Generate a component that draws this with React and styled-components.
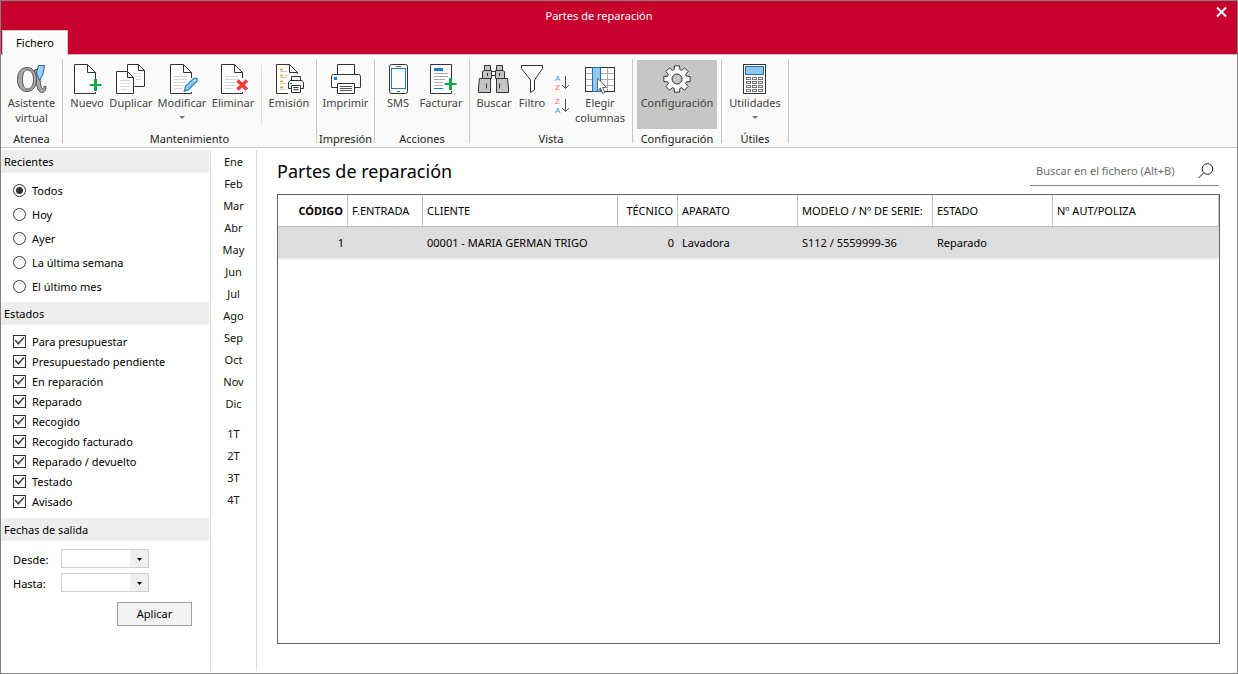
import React, { useState } from "react";
import styled, { createGlobalStyle, css } from "styled-components";

const GlobalStyle = createGlobalStyle`
  * { box-sizing: border-box; }
  body {
    margin: 0;
    background: #fff;
    color: #000;
    font: 11px/15px "Noto Sans", "Open Sans", sans-serif;
  }
  button, input, select { font: inherit; color: inherit; margin: 0; padding: 0; }
`;

const Window = styled.div`
  display: flex;
  flex-direction: column;
  min-height: 100vh;
  border: 1px solid #808080;
`;

/* ---------- title bar ---------- */

const TitleBar = styled.header`
  display: grid;
  grid-template-columns: 1fr 40px;
  align-items: center;
  height: 29px;
  background: #c8002d;
  color: #fff;
`;

const WindowTitle = styled.h1`
  margin: 0;
  font-size: 11px;
  font-weight: 400;
  text-align: center;
`;

const CloseButton = styled.button`
  justify-self: end;
  display: flex;
  padding: 0 10px 8px;
  border: 0;
  background: none;
`;

const TabBar = styled.nav`
  display: flex;
  height: 25px;
  padding-left: 1px;
  background: #c8002d;
  box-shadow: inset 0 -1px #c0c0c0;
`;

const Tab = styled.button`
  width: 66px;
  padding-bottom: 2px;
  border: solid #c8c8c8;
  border-width: 1px 1px 0;
  background: #fafafa;
`;

/* ---------- ribbon ---------- */

const Ribbon = styled.div`
  display: flex;
  height: 93px;
  background: #fafafa;
  border-bottom: 1px solid #c6c6c6;
`;

const Group = styled.section`
  display: flex;
  flex-direction: column;
  padding: 5px 4px 0;
`;

const GroupItems = styled.div`
  display: flex;
  height: 69px;
`;

const GroupLabel = styled.h2`
  margin: 2px -4px 0;
  font-size: 11px;
  font-weight: 400;
  line-height: 15px;
  color: #222;
  text-align: center;
`;

const Divider = styled.span`
  width: 1px;
  margin: 4px 0;
  background: #c8c8c8;
`;

const InnerDivider = styled.span`
  width: 1px;
  margin: 5px 4px;
  background: #e0e0e0;
`;

const RibbonButton = styled.button`
  display: flex;
  flex-direction: column;
  align-items: center;
  width: ${(p) => p.$width}px;
  padding-top: 4px;
  border: 0;
  background: ${(p) => (p.$active ? "#c6c6c6" : "none")};
  color: #444;
  line-height: 15px;
  white-space: nowrap;
  svg { flex: none; }
`;

const SortStack = styled.div`
  display: flex;
  flex-direction: column;
  gap: 3px;
  width: 22px;
  padding: 13px 0 0 4px;
`;

const SortButton = styled.button`
  display: flex;
  border: 0;
  background: none;
`;

const MenuArrow = styled.span`
  margin-top: 6px;
  border: solid transparent;
  border-width: 3px 3px 0;
  border-top-color: #777;
`;

/* ---------- side filters ---------- */

const Body = styled.div`
  display: flex;
  flex: 1;
  padding: 2px 0;
`;

const Sidebar = styled.aside`
  width: 210px;
  flex: none;
  padding-right: 1px;
  border-right: 1px solid #dcdcdc;
`;

const SectionTitle = styled.h2`
  margin: 0;
  padding: 4px 3px;
  background: #eee;
  font-size: 11px;
  font-weight: 400;
  line-height: 15px;
`;

const OptionList = styled.fieldset`
  display: flex;
  flex-direction: column;
  margin: 0;
  padding: ${(p) => (p.$dense ? "6px 12px 7px" : "5px 12px 4px")};
  border: 0;
`;

const Option = styled.label`
  display: flex;
  align-items: center;
  gap: 6px;
  height: ${(p) => (p.$dense ? 20 : 24)}px;
`;

const mark = css`
  appearance: none;
  display: grid;
  place-items: center;
  width: 13px;
  height: 13px;
  border: 1px solid #333;
  background: #fff;
`;

const Radio = styled.input`
  ${mark}
  border-radius: 50%;
  &:checked::before {
    content: "";
    width: 7px;
    height: 7px;
    border-radius: 50%;
    background: #333;
  }
`;

const Check = styled.input`
  ${mark}
  &:checked::before {
    content: "";
    width: 10px;
    height: 8px;
    background: #444;
    clip-path: polygon(0 45%, 12% 32%, 38% 68%, 88% 0, 100% 14%, 38% 100%);
  }
`;

const DateForm = styled.form`
  display: grid;
  grid-template-columns: 43px 88px;
  gap: 5px;
  align-items: center;
  padding: 8px 17px 0 12px;
  label { padding-top: 2px; }
`;

const SelectBox = styled.span`
  position: relative;
  display: flex;
  svg { position: absolute; right: 7px; top: 9px; pointer-events: none; }
`;

const DateSelect = styled.select`
  appearance: none;
  width: 88px;
  height: 19px;
  border: 1px solid #d0d0d0;
  border-radius: 0;
  background: linear-gradient(to left, #f0f0f0 18px, #fff 18px);
`;

const ApplyButton = styled.button`
  grid-column: 1 / -1;
  justify-self: end;
  width: 75px;
  height: 24px;
  margin: 5px -43px 0 0;
  padding-bottom: 2px;
  border: 1px solid #a0a0a0;
  background: #f3f3f3;
`;

const Periods = styled.nav`
  display: flex;
  flex-direction: column;
  gap: 8px;
  width: 46px;
  flex: none;
  border-right: 1px solid #dcdcdc;
`;

const PeriodGroup = styled.div`
  display: flex;
  flex-direction: column;
`;

const PeriodButton = styled.button`
  height: 22px;
  border: 0;
  background: none;
  color: #111;
`;

/* ---------- main list ---------- */

const Main = styled.main`
  display: flex;
  flex-direction: column;
  flex: 1;
  padding: 7px 17px 27px 20px;
`;

const ListHeader = styled.div`
  display: flex;
  justify-content: space-between;
  align-items: center;
  height: 29px;
  margin-bottom: 8px;
  padding-right: 1px;
`;

const ListTitle = styled.h2`
  margin: 0;
  padding-bottom: 2px;
  font-size: 18px;
  font-weight: 400;
  line-height: 24px;
`;

const SearchBox = styled.label`
  display: flex;
  align-items: center;
  width: 189px;
  height: 29px;
  padding: 0 5px 0 6px;
  border-bottom: 1px solid #808080;
`;

const SearchInput = styled.input`
  flex: 1;
  min-width: 0;
  padding-bottom: 2px;
  border: 0;
  outline: 0;
  background: none;
  &::placeholder { color: #6d6d6d; opacity: 1; }
`;

const ListFrame = styled.div`
  flex: 1;
  border: 1px solid #666;
`;

const Table = styled.table`
  width: 100%;
  table-layout: fixed;
  border-collapse: separate;
  border-spacing: 0;
  white-space: nowrap;
`;

const HeadCell = styled.th`
  width: ${(p) => (p.$width ? `${p.$width}px` : "auto")};
  height: 32px;
  padding: 0 4px;
  border: solid #c0c0c0;
  border-width: 0 1px 1px 0;
  font-weight: ${(p) => (p.$strong ? 700 : 400)};
  text-align: ${(p) => (p.$right ? "right" : "left")};
`;

const Cell = styled.td`
  height: 33px;
  padding: 0 4px;
  border-bottom: 2px solid #f0f0f0;
  background: #ddd;
  text-align: ${(p) => (p.$right ? "right" : "left")};
`;

/* ---------- icons ---------- */

const Icon = ({ children }) => (
  <svg width="32" height="31" viewBox="0 0 32 31" fill="none" stroke="#333" aria-hidden="true">
    {children}
  </svg>
);

const Plus = ({ x, y }) => (
  <g stroke="#14a94b">
    <path d={`M${x} ${y - 6}v12`} strokeWidth="3" />
    <path d={`M${x - 6} ${y}h12`} strokeWidth="2" />
  </g>
);

const AssistantIcon = () => (
  <Icon>
    <g fill="#a6a6a6" stroke="#555">
      <path d="M18.500 6C20 14 20 28.500 25.500 28.500C28.500 28.500 30 26 30 22.500H28C27.800 25 26.500 25.500 25.500 23.500C23.500 19 24 11 23.500 5Z" />
      <path
        fillRule="evenodd"
        d="M11 3.500C17 3.500 20.500 9 20.500 15.500C20.500 22 17 27.500 11 27.500C5 27.500 1.500 22.500 1.500 15.500C1.500 8.500 5 3.500 11 3.500ZM11.500 6C8 6 6.500 10 6.500 15.500C6.500 21 8 25 11.500 25C15 25 17.500 21 17.500 15.500C17.500 10 15 6 11.500 6Z"
      />
    </g>
    <path d="M22.500 1.500H28.500L27 10L23.500 16.500L20.500 9Z" fill="#9ccdf2" stroke="#1f66ab" />
  </Icon>
);

const NewIcon = () => (
  <Icon>
    <path fill="#fff" d="M24.500 16V8.500L16.500.5H3.500V29.500H24.500V28" />
    <path d="M16.500.5V8.500H24.500" />
    <Plus x={24.5} y={21} />
  </Icon>
);

const DuplicateIcon = () => (
  <Icon>
    <path fill="#fff" d="M12.500 7V.5H23.500L29.500 6.500V22.500H19.500" />
    <path d="M23.500.5V6.500H29.500" />
    <path fill="#fff" d="M1.500 7.500H12.500L18.500 13.500V29.500H1.500Z" />
    <path d="M12.500 7.500V13.500H18.500" />
    <path stroke="#d8d8d8" d="M5 16.500H15M5 19.500H15M5 22.500H15M5 25.500H12M20 9.500H26M20 12.500H26M21 15.500H26" />
  </Icon>
);

const LinedPage = () => (
  <>
    <path fill="#fff" d="M25.500 14V8.500L17.500.5H4.500V29.500H25.500V28" />
    <path d="M17.500.5V8.500H25.500" />
    <path stroke="#d8d8d8" d="M8 12.500H21M8 15.500H21M8 18.500H19M8 21.500H17M8 24.500H16" />
  </>
);

const EditIcon = () => (
  <Icon>
    <LinedPage />
    <path d="M18.500 27L20 22L28 14.500H31V17L22.500 25.500Z" fill="#d3eafa" stroke="#2a8fd0" strokeWidth="1.500" />
    <path d="M21.500 24L28.500 17" stroke="#2a8fd0" />
  </Icon>
);

const DeleteIcon = () => (
  <Icon>
    <LinedPage />
    <path d="M20.500 16.500L30 25.500M30 16.500L20.500 25.500" stroke="#f03c3c" strokeWidth="3.500" />
  </Icon>
);

const IssueIcon = () => (
  <Icon>
    <path fill="#fff" stroke="none" d="M3.500.5H16.500L24.500 8.500V29.500H3.500Z" />
    <path d="M15 29.500H3.500V.5H16.500L24.500 8.500V10M16.500.5V8.500H24.500" />
    <path stroke="#f0a000" strokeWidth="1.500" d="M7 5.500h3M7 11.500h3M7 17.500h3M7 23.500h3" />
    <path stroke="#ccc" d="M7 7.500h7M7 13.500h7M7 19.500h6M7 25.500h6M12 11.500h4" />
    <path fill="#fff" d="M18.500 17V12.500H27.500V17M18.500 24.500H15.500V18.500L17 16.500H29L30.500 18.500V24.500H27.500M18.500 21.500H27.500V28.500H18.500Z" />
    <path d="M20.500 23.500h5M20.500 25.500h5" />
    <path d="M17 19.500h2" stroke="#1b80cc" />
  </Icon>
);

const PrintIcon = () => (
  <Icon>
    <path fill="#fff" d="M7.500 10.500V.5H24.500V10.500" />
    <path fill="#fff" d="M7.500 23.500H1.500V12.500Q1.500 10.500 3.500 10.500H28.500Q30.500 10.500 30.500 12.500V23.500H24.500" />
    <path fill="#fff" d="M7.500 19.500H24.500V29.500H7.500Z" />
    <path d="M10 22.500h12M10 24.500h12M10 26.500h12" stroke="#555" />
    <path d="M4 13h3v3H4Z" fill="#1b80cc" stroke="none" />
  </Icon>
);

const PhoneIcon = () => (
  <Icon>
    <rect x="7.500" y=".5" width="18" height="29" rx="2" fill="#fff" />
    <rect x="9.500" y="4.500" width="14" height="20" stroke="#1b80cc" />
    <path d="M14 2.500h5M15 27.500h3" stroke="#666" />
  </Icon>
);

const InvoiceIcon = () => (
  <Icon>
    <path fill="#fff" d="M26.500 14V.5H5.500V29.500H26.500V27" />
    <path d="M9 4h9v3H9Z" fill="#1b80cc" stroke="none" />
    <path stroke="#aaa" d="M9 9.500h14M9 12.500h14M9 15.500h11M9 18.500h9M9 21.500h9" />
    <path stroke="#1b80cc" d="M9 24.500h9" />
    <Plus x={25.5} y={20} />
  </Icon>
);

const BinocularsIcon = () => (
  <Icon>
    <g fill="#c4c4c4">
      <path d="M13.500 7.500h4v4h-4Z" fill="#fff" />
      <path d="M6.500 1.500h6v5h-6ZM4.500 7.500L6 6.500H13.500V14.500H4.500ZM1.500 14.500H12.500V28.500H.5V24Z" />
      <path d="M18.500 1.500h6v5h-6ZM26.500 7.500L25 6.500H17.500V14.500H26.500ZM29.500 14.500H18.500V28.500H30.500V24Z" />
    </g>
    <path d="M8.500 19.500v5M21.500 19.500v5M9.500 9v3M21.500 9v3" />
  </Icon>
);

const FilterIcon = () => (
  <Icon>
    <path fill="#fff" d="M5.500 1.500H26.500V4.500L18.500 16V26L14.500 28.500V16L5.500 4.500Z" />
  </Icon>
);

const SortIcon = ({ letters }) => (
  <svg width="16" height="20" viewBox="0 0 16 20" fill="none" aria-hidden="true">
    {letters.split("").map((c, i) => (
      <text
        key={c}
        x="1"
        y={i ? 17 : 8}
        fontFamily="Liberation Sans, sans-serif"
        fontSize="8"
        fill={c === "A" ? "#3f9ad6" : "#ee6a70"}
      >
        {c}
      </text>
    ))}
    <path d="M11.500 3V15.500M8 12L11.500 15.500L15 12" stroke="#555" />
  </svg>
);

const ColumnsIcon = () => (
  <Icon>
    <rect x="1.500" y="3.500" width="29" height="24" fill="#fff" />
    <path stroke="#aaa" d="M2 9.500h28M2 15.500h28M2 21.500h28M23.500 4v23" />
    <rect x="8.500" y="3.500" width="8" height="24" fill="#8fc7f0" stroke="#1b6fb3" />
    <path fill="#fff" stroke="#666" d="M13.500 14V26.500L16.500 24L18.500 29.500L21 28.500L18.500 23.500H22.500Z" />
  </Icon>
);

const gearOutline = (() => {
  const points = [];
  for (let i = 0; i < 8; i += 1) {
    [[-17, 9.8], [-11, 13.4], [11, 13.4], [17, 9.8]].forEach(([offset, radius]) => {
      const angle = ((i * 45 + offset) * Math.PI) / 180;
      points.push(`${(16 + radius * Math.cos(angle)).toFixed(2)} ${(15 + radius * Math.sin(angle)).toFixed(2)}`);
    });
  }
  return `M${points.join("L")}Z`;
})();

const GearIcon = () => (
  <Icon>
    <path d={gearOutline} fill="#fff" strokeLinejoin="round" />
    <circle cx="16" cy="15" r="5" fill="#c6c6c6" />
  </Icon>
);

const CalculatorIcon = () => (
  <Icon>
    <rect x="4.500" y=".5" width="22" height="29" fill="#fff" />
    <rect x="6.500" y="2.500" width="18" height="8" fill="#8fc7f0" stroke="#1b6fb3" />
    {[13.5, 17.5, 21.5, 25.5].map((y) =>
      [7.5, 13.5, 19.5].map((x) => <rect key={`${x}-${y}`} x={x} y={y} width="4" height="2" stroke="#777" />)
    )}
  </Icon>
);

const SearchIcon = () => (
  <svg width="16" height="16" viewBox="0 0 16 16" fill="none" stroke="#222" aria-hidden="true">
    <circle cx="9.500" cy="6" r="5.300" />
    <path d="M5.500 10L.5 15" />
  </svg>
);

const CloseIcon = () => (
  <svg width="11" height="10" viewBox="0 0 11 10" stroke="#fff" strokeWidth="2" aria-hidden="true">
    <path d="M1 .5L10 9.500M10 .5L1 9.500" />
  </svg>
);

const CaretIcon = () => (
  <svg width="5" height="3" viewBox="0 0 5 3" aria-hidden="true">
    <path d="M0 0H5L2.500 3Z" />
  </svg>
);

/* ---------- data ---------- */

const recents = ["Todos", "Hoy", "Ayer", "La última semana", "El último mes"];
const states = [
  "Para presupuestar", "Presupuestado pendiente", "En reparación", "Reparado", "Recogido",
  "Recogido facturado", "Reparado / devuelto", "Testado", "Avisado",
];
const months = ["Ene", "Feb", "Mar", "Abr", "May", "Jun", "Jul", "Ago", "Sep", "Oct", "Nov", "Dic"];
const quarters = ["1T", "2T", "3T", "4T"];
const columns = [
  { label: "CÓDIGO", width: 70, right: true, strong: true },
  { label: "F.ENTRADA", width: 75 },
  { label: "CLIENTE", width: 195 },
  { label: "TÉCNICO", width: 60, right: true },
  { label: "APARATO", width: 120 },
  { label: "MODELO / Nº DE SERIE:", width: 135 },
  { label: "ESTADO", width: 120 },
  { label: "Nº AUT/POLIZA" },
];
const rows = [["1", "", "00001 - MARIA GERMAN TRIGO", "0", "Lavadora", "S112 / 5559999-36", "Reparado", ""]];

const Action = ({ icon, width, active, menu, children }) => (
  <RibbonButton type="button" $width={width} $active={active}>
    {icon}
    <span>{children}</span>
    {menu && <MenuArrow />}
  </RibbonButton>
);

const RibbonGroup = ({ label, children }) => (
  <>
    <Group>
      <GroupItems>{children}</GroupItems>
      <GroupLabel>{label}</GroupLabel>
    </Group>
    <Divider />
  </>
);

export default function App() {
  const [recent, setRecent] = useState("Todos");
  return (
    <>
      <GlobalStyle />
      <Window>
        <TitleBar>
          <WindowTitle>Partes de reparación</WindowTitle>
          <CloseButton type="button" aria-label="Cerrar"><CloseIcon /></CloseButton>
        </TitleBar>
        <TabBar><Tab type="button">Fichero</Tab></TabBar>
        <Ribbon>
          <RibbonGroup label="Atenea">
            <Action icon={<AssistantIcon />} width={53}>Asistente<br />virtual</Action>
          </RibbonGroup>
          <RibbonGroup label="Mantenimiento">
            <Action icon={<NewIcon />} width={40}>Nuevo</Action>
            <Action icon={<DuplicateIcon />} width={48}>Duplicar</Action>
            <Action icon={<EditIcon />} width={54} menu>Modificar</Action>
            <Action icon={<DeleteIcon />} width={48}>Eliminar</Action>
            <InnerDivider />
            <Action icon={<IssueIcon />} width={46}>Emisión</Action>
          </RibbonGroup>
          <RibbonGroup label="Impresión">
            <Action icon={<PrintIcon />} width={49}>Imprimir</Action>
          </RibbonGroup>
          <RibbonGroup label="Acciones">
            <Action icon={<PhoneIcon />} width={38}>SMS</Action>
            <Action icon={<InvoiceIcon />} width={48}>Facturar</Action>
          </RibbonGroup>
          <RibbonGroup label="Vista">
            <Action icon={<BinocularsIcon />} width={40}>Buscar</Action>
            <Action icon={<FilterIcon />} width={36}>Filtro</Action>
            <SortStack>
              <SortButton type="button" aria-label="Orden ascendente"><SortIcon letters="AZ" /></SortButton>
              <SortButton type="button" aria-label="Orden descendente"><SortIcon letters="ZA" /></SortButton>
            </SortStack>
            <Action icon={<ColumnsIcon />} width={56}>Elegir<br />columnas</Action>
          </RibbonGroup>
          <RibbonGroup label="Configuración">
            <Action icon={<GearIcon />} width={80} active>Configuración</Action>
          </RibbonGroup>
          <RibbonGroup label="Útiles">
            <Action icon={<CalculatorIcon />} width={58} menu>Utilidades</Action>
          </RibbonGroup>
        </Ribbon>
        <Body>
          <Sidebar>
            <SectionTitle>Recientes</SectionTitle>
            <OptionList aria-label="Recientes">
              {recents.map((r) => (
                <Option key={r}>
                  <Radio type="radio" name="recent" checked={recent === r} onChange={() => setRecent(r)} />
                  {r}
                </Option>
              ))}
            </OptionList>
            <SectionTitle>Estados</SectionTitle>
            <OptionList $dense aria-label="Estados">
              {states.map((s) => (
                <Option key={s} $dense>
                  <Check type="checkbox" defaultChecked />
                  {s}
                </Option>
              ))}
            </OptionList>
            <SectionTitle>Fechas de salida</SectionTitle>
            <DateForm onSubmit={(e) => e.preventDefault()}>
              <label htmlFor="from">Desde:</label>
              <SelectBox><DateSelect id="from" /><CaretIcon /></SelectBox>
              <label htmlFor="to">Hasta:</label>
              <SelectBox><DateSelect id="to" /><CaretIcon /></SelectBox>
              <ApplyButton type="submit">Aplicar</ApplyButton>
            </DateForm>
          </Sidebar>
          <Periods>
            {[months, quarters].map((list) => (
              <PeriodGroup key={list[0]}>
                {list.map((p) => <PeriodButton type="button" key={p}>{p}</PeriodButton>)}
              </PeriodGroup>
            ))}
          </Periods>
          <Main>
            <ListHeader>
              <ListTitle>Partes de reparación</ListTitle>
              <SearchBox>
                <SearchInput type="text" aria-label="Buscar en el fichero" placeholder="Buscar en el fichero (Alt+B)" />
                <SearchIcon />
              </SearchBox>
            </ListHeader>
            <ListFrame>
              <Table>
                <thead>
                  <tr>
                    {columns.map((c) => (
                      <HeadCell key={c.label} scope="col" $width={c.width} $right={c.right} $strong={c.strong}>
                        {c.label}
                      </HeadCell>
                    ))}
                  </tr>
                </thead>
                <tbody>
                  {rows.map((row) => (
                    <tr key={row[0]}>
                      {row.map((value, i) => (
                        <Cell key={columns[i].label} $right={columns[i].right}>{value}</Cell>
                      ))}
                    </tr>
                  ))}
                </tbody>
              </Table>
            </ListFrame>
          </Main>
        </Body>
      </Window>
    </>
  );
}
